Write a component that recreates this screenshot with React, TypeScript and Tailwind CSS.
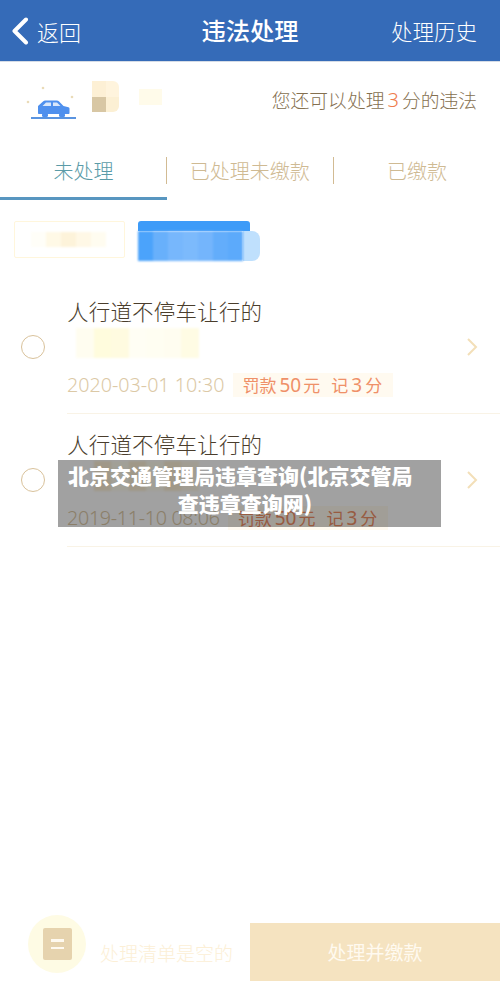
const cjk = { fontFamily: '"Noto Sans CJK SC", "Noto Sans", sans-serif' };
const latin = { fontFamily: '"Noto Sans", sans-serif' };

function Mosaic({ colors, cell, className }: { colors: string[]; cell: string; className?: string }) {
  return (
    <div className={`flex blur-[1px] ${className ?? ''}`}>
      {colors.map((c, i) => (
        <div key={i} className={cell} style={{ backgroundColor: c }} />
      ))}
    </div>
  );
}

function Violation({ date, colors, dateClass }: { date: string; colors: string[]; dateClass: string }) {
  return (
    <div className="flex items-center h-[133px]">
      <div className="w-[67px] shrink-0 pl-[21px] -translate-y-[1px]">
        <div className="w-[24px] h-[24px] rounded-full border-[1.5px] border-[#d9c29b]" />
      </div>
      <div className="flex-1 h-full border-b border-[#f9f3e6] pt-[14px]">
        <div className="text-[21.5px] leading-[32px] text-[#4a3d2c] font-light tracking-[0.2px]">人行道不停车让行的</div>
        <div className="h-[30px] mt-[1px] flex pl-[9px]">
          <Mosaic className="h-[30px]" cell="w-[17.500px] h-[30px]" colors={colors} />
        </div>
        <div className="flex items-center mt-[15px] h-[24px]">
          <span className={`text-[19.700px] leading-[24px] text-[#dcc9a6] font-light ${dateClass}`} style={latin}>{date}</span>
          <div className="ml-[8px] flex items-center h-[24px] bg-[#fffaf0] pl-[10px] pr-[11px] text-[#ef9068] text-[17px]">
            <span>罚款</span>
            <span className="ml-[3px] text-[19px]" style={latin}>50</span>
            <span className="ml-[2px]">元</span>
            <span className="ml-[11px]">记</span>
            <span className="ml-[3px] text-[19px]" style={latin}>3</span>
            <span className="ml-[3px]">分</span>
          </div>
        </div>
      </div>
      <div className="w-0 relative">
        <svg className="absolute right-[22px] -top-[11px]" width="12" height="20" viewBox="0 0 12 20" fill="none">
          <path d="M2 2l8 8-8 8" stroke="#f3dfb8" strokeWidth="2" />
        </svg>
      </div>
    </div>
  );
}

export default function App() {
  return (
    <div className="relative w-[500px] h-[987px] bg-white overflow-hidden flex flex-col" style={cjk}>
      {/* nav */}
      <div className="h-[62px] shrink-0 bg-[#356bb8] border-b border-[#d5dce6] flex items-center justify-between text-white">
        <div className="flex items-center pl-[11px] w-[140px]">
          <svg width="18" height="28" viewBox="0 0 18 28" fill="none">
            <path d="M15 2.5L3.5 14 15 25.5" stroke="white" strokeWidth="4" strokeLinecap="round" strokeLinejoin="round" />
          </svg>
          <span className="ml-[8px] text-[22px] font-light leading-none">返回</span>
        </div>
        <span className="text-[24.300px] font-medium leading-none">违法处理</span>
        <span className="w-[140px] pr-[23px] text-right text-[21.500px] font-light leading-none">处理历史</span>
      </div>

      {/* quota */}
      <div className="h-[78px] shrink-0 flex items-center justify-between pr-[23px]">
        <div className="flex items-start pl-[26px] h-[44px]">
          <svg width="50" height="44" viewBox="0 0 50 44" fill="none" className="shrink-0">
            <circle cx="17" cy="9" r="1.3" fill="#eadbb8" />
            <circle cx="2" cy="23" r="1.3" fill="#eadbb8" />
            <circle cx="46" cy="18" r="1.3" fill="#eadbb8" />
            <path d="M12 27l5-4.500c.6-.7 1.400-1 2.300-1h11.400c1 0 1.800.4 2.400 1l4.400 4.500 5 1.200c.7.200 1 .7 1 1.300V34c0 .6-.4 1-1 1H13c-.6 0-1-.4-1-1z" fill="#4f90ee" />
            <path d="M20 23.500h5v3.500h-8.500zM27 23.500h4l3.500 3.500H27z" fill="#d9e7fb" />
            <rect x="16" y="34" width="6" height="4" rx="1.500" fill="#4f90ee" />
            <rect x="33" y="34" width="6" height="4" rx="1.500" fill="#4f90ee" />
            <rect x="5" y="38" width="45" height="2" fill="#5a94e0" />
          </svg>
          <div className="ml-[16px] grid grid-cols-2 w-[27px] blur-[0.5px] mt-[2px]">
            <div className="h-[15.500px] bg-[#fdf0d5]" />
            <div className="h-[15.500px] bg-[#fff4dd] rounded-tr-[6px]" />
            <div className="h-[15.500px] bg-[#d8c7a4]" />
            <div className="h-[15.500px] bg-[#fcf0d4] rounded-br-[6px]" />
          </div>
          <div className="ml-[20px] mt-[10px] w-[23px] h-[16px] bg-[#fffbea] blur-[0.5px]" />
        </div>
        <div className="text-[18.800px] font-light text-[#85704f] leading-none flex items-center -translate-y-[1px]">
          您还可以处理
          <span className="mx-[3px] text-[#ee7c4c] text-[20px]" style={latin}>3</span>
          分的违法
        </div>
      </div>

      {/* tabs */}
      <div className="h-[61px] shrink-0 flex items-start">
        <div className="w-[167px] h-[60px] border-b-[3px] border-[#5896c0] flex justify-center pt-[17px] text-[20px] leading-[28px] font-light text-[#5a9ba8]">未处理</div>
        <div className="mt-[17px] -ml-[1.500px] w-[1.500px] h-[27px] bg-[#d2bb93]" />
        <div className="flex-1 flex justify-center pt-[17px] text-[20px] leading-[28px] font-light text-[#cfba93]">已处理未缴款</div>
        <div className="mt-[17px] w-[1.500px] h-[27px] bg-[#d2bb93]" />
        <div className="w-[166px] flex justify-center pt-[17px] text-[20px] leading-[28px] font-light text-[#cfba93]">已缴款</div>
      </div>

      {/* plate chips */}
      <div className="h-[80px] shrink-0 flex items-start pl-[14px] pt-[20px]">
        <div className="w-[111px] h-[37px] border border-[#fff6dc] rounded-[2px] flex items-center pl-[16px]">
          <Mosaic cell="w-[15px] h-[15px]" colors={['#fffef8', '#fff9e6', '#fdf3da', '#fff8e6', '#fffcf0']} />
        </div>
        <div className="ml-[13px] flex flex-col">
          <div className="w-[112px] h-[10px] bg-[#3d9bf8] rounded-t-[3px]" />
          <div className="flex blur-[0.5px]">
            <Mosaic cell="w-[15px] h-[30px]" colors={['#4ba3fb', '#68b0fb', '#77b7fc', '#7cbafc', '#74b5fc', '#63adfb', '#5caafb']} />
            <div className="w-[17px] h-[30px] bg-[#bfe0fd] rounded-r-[8px]" />
          </div>
        </div>
      </div>

      {/* list */}
      <Violation date="2020-03-01 10:30" dateClass="" colors={['#fffdf0', '#fffcdd', '#fffbe0', '#fffef4', '#fffef2', '#fffdf0', '#fffce4']} />
      <Violation date="2019-11-10 08:06" dateClass="tracking-[-0.3px]" colors={['#ffffff', '#fdf1d8', '#fffdf0', '#fdf1d8', '#fffdf0', '#fdf1d8', '#fff9e8']} />

      <div className="flex-1" />

      {/* footer */}
      <div className="h-[58px] shrink-0 mb-[6px] flex items-stretch">
        <div className="w-[250px] relative flex items-center justify-end pr-[17px]">
          <span className="text-[19px] font-light text-[#fcefd6] translate-y-[1px]">处理清单是空的</span>
          <div className="absolute left-[28px] -top-[8px] w-[58px] h-[58px] rounded-full bg-[#fefbe4] flex items-center justify-center">
            <div className="w-[29px] h-[32px] rounded-[2px] bg-[#e6d3ae] flex flex-col items-center justify-center gap-[5px]">
              <div className="w-[13px] h-[2.500px] bg-[#fffaf0]" />
              <div className="w-[13px] h-[2.500px] bg-[#fffaf0]" />
            </div>
          </div>
        </div>
        <div className="flex-1 bg-[#f5e3c0] flex items-center justify-center text-[19px] font-normal text-[#fffaf0]">处理并缴款</div>
      </div>

      {/* watermark */}
      <div className="absolute left-[58px] top-[460px] w-[383px] h-[67px] bg-black/[.37] pl-[10px] pr-[30px] text-center text-white text-[21px] leading-[27px] font-black whitespace-nowrap">
        <div className="pt-[2px]">北京交通管理局违章查询(北京交管局</div>
        <div className="pl-[11px] pt-[1px]">查违章查询网)</div>
      </div>
    </div>
  );
}
